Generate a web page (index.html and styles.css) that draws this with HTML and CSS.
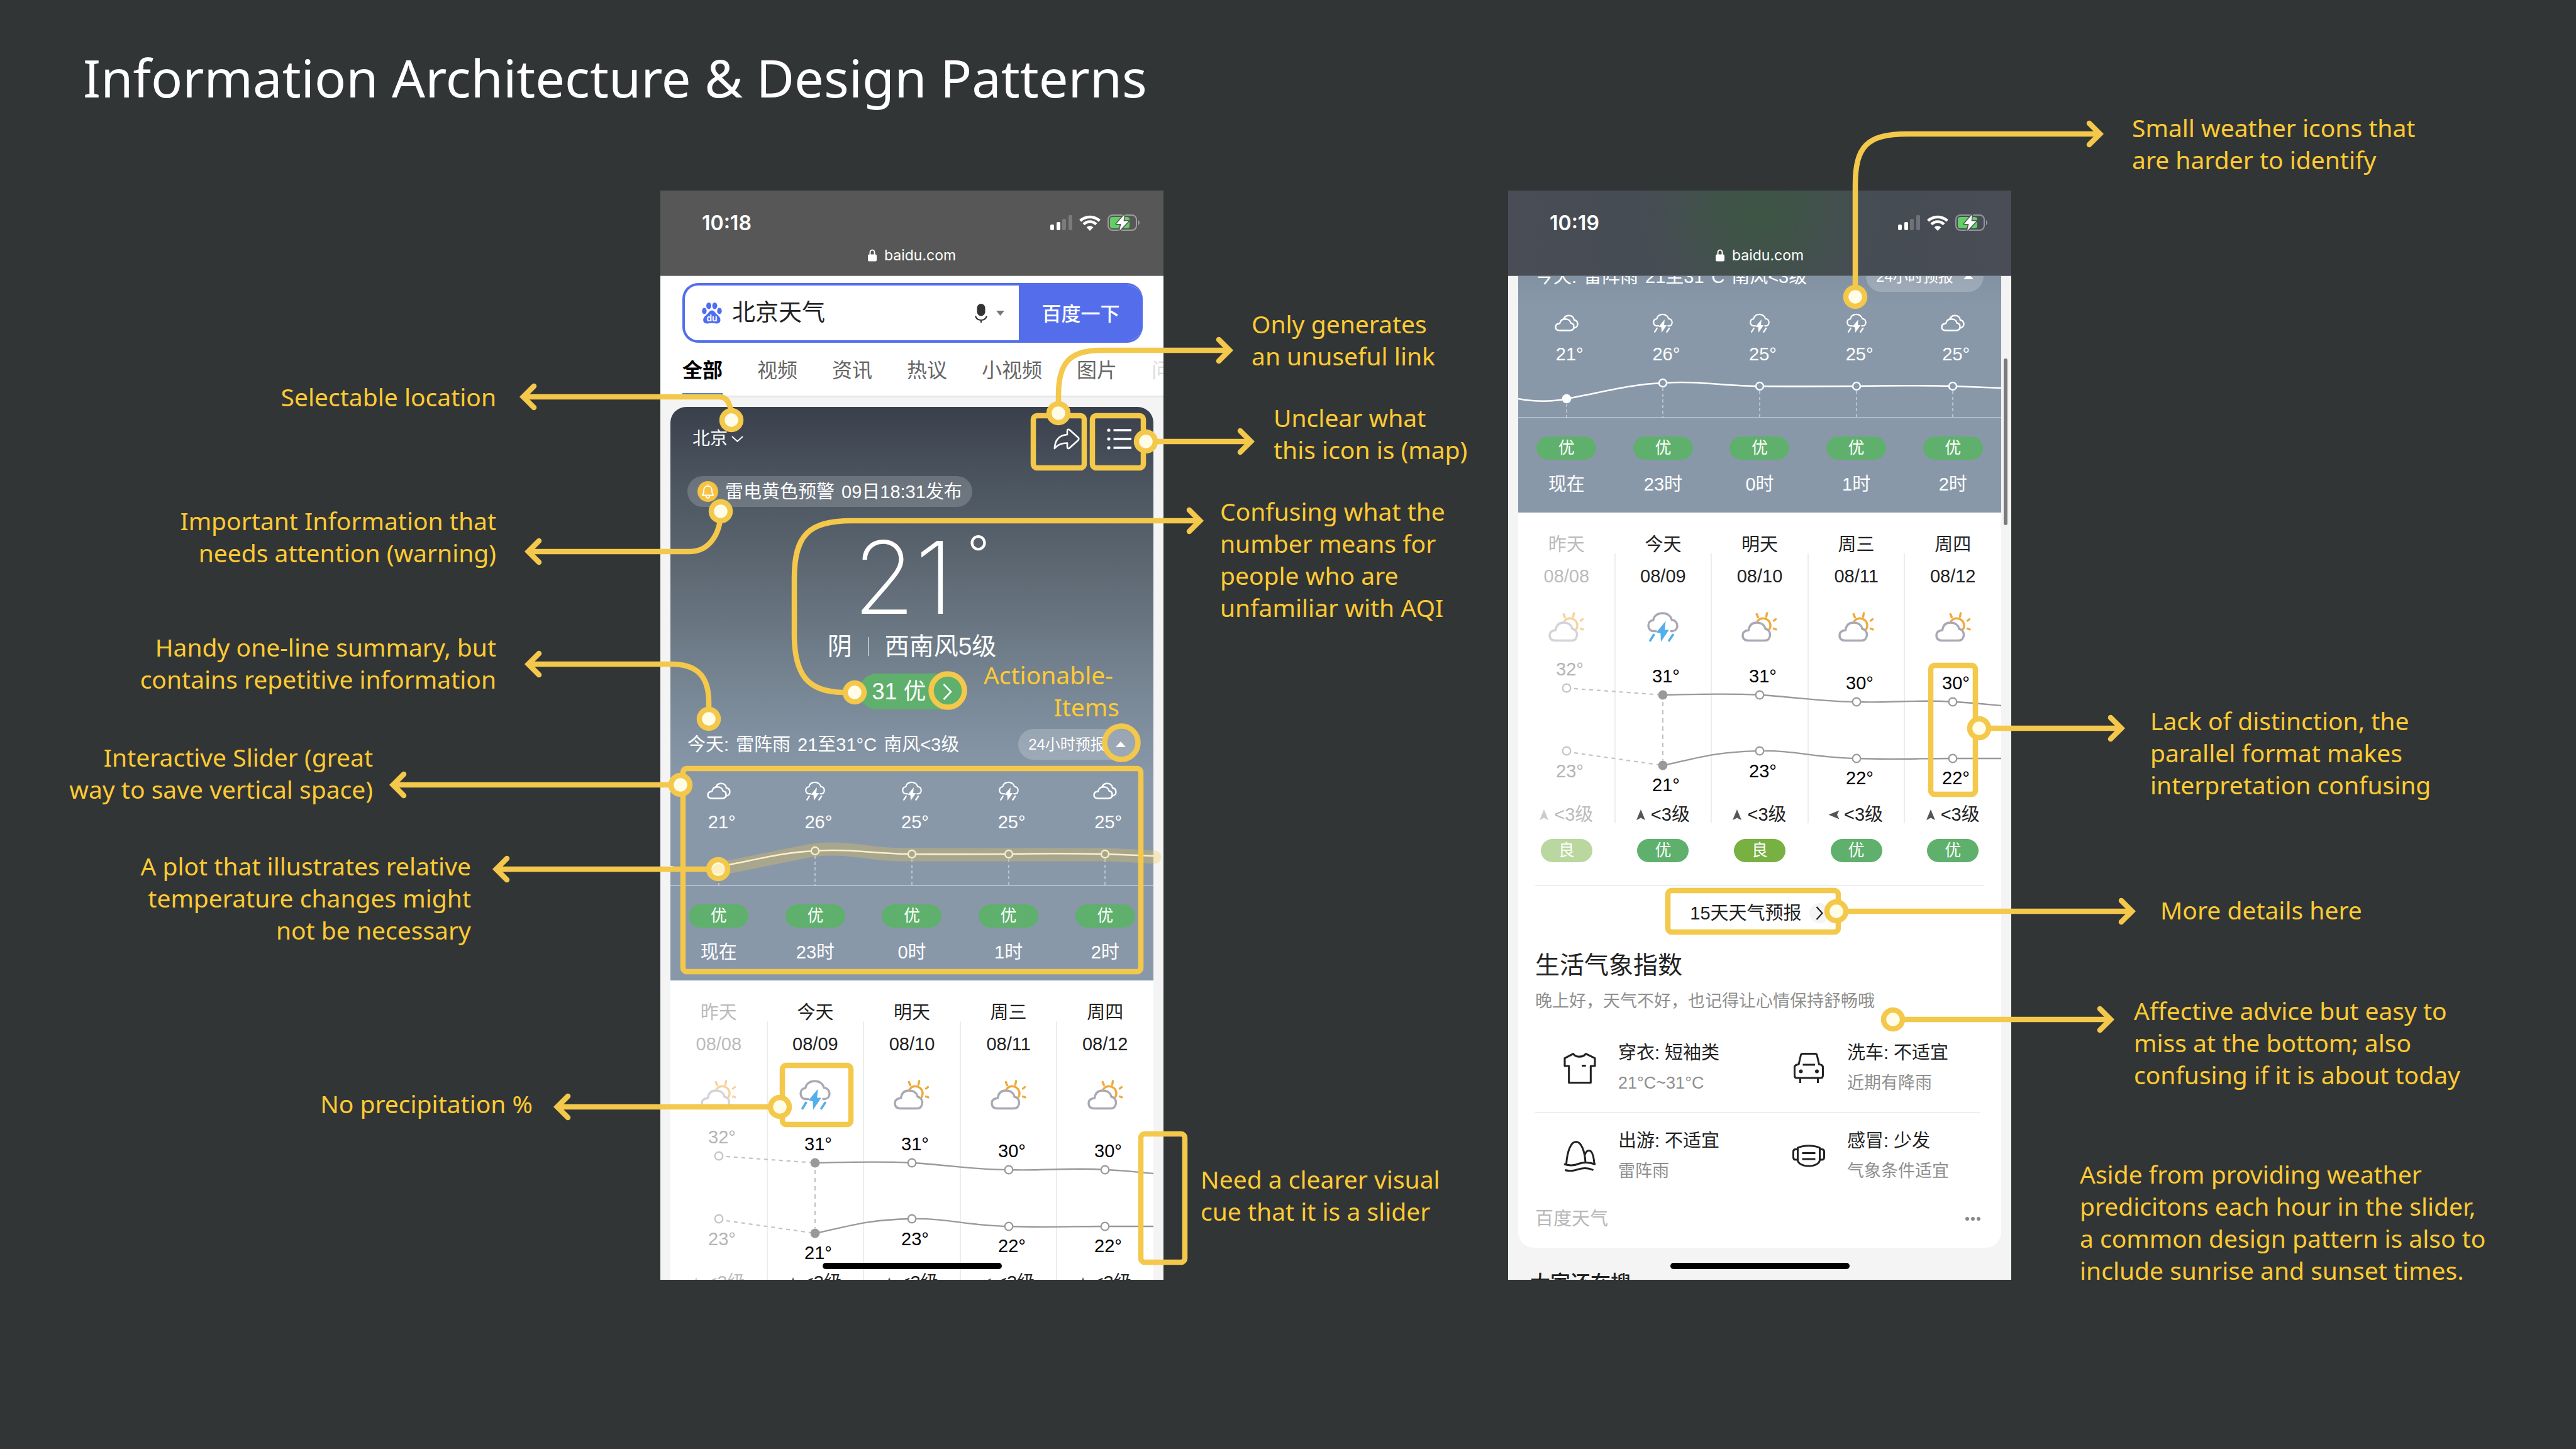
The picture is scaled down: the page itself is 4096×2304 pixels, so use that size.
FILE: index.html
```html
<!DOCTYPE html>
<html lang="en">
<head>
<meta charset="utf-8">
<title>Information Architecture &amp; Design Patterns</title>
<link rel="stylesheet" href="styles.css">
</head>
<body>
<svg class="defs" aria-hidden="true">
  <symbol id="signal" viewBox="0 0 35 24">
    <rect x="0" y="15" width="6" height="9" rx="2" fill="#fff"/>
    <rect x="10" y="11" width="6" height="13" rx="2" fill="#fff"/>
    <rect x="19" y="6" width="6" height="18" rx="2" fill="#fff" opacity=".22"/>
    <rect x="29" y="0" width="6" height="24" rx="2" fill="#fff" opacity=".22"/>
  </symbol>
  <symbol id="wifi" viewBox="0 0 34 25">
    <g fill="none" stroke="#fff" stroke-width="4.6">
      <path d="M1.7 9.2A22 22 0 0 1 32.3 9.2"/>
      <path d="M7 14.6A14.3 14.3 0 0 1 27 14.6"/>
    </g>
    <path d="M17 25 11.6 19.6A7.6 7.6 0 0 1 22.4 19.6Z" fill="#fff"/>
  </symbol>
  <symbol id="battery" viewBox="0 0 51 26">
    <rect x="1" y="1" width="45" height="24" rx="7" fill="none" stroke="#fff" stroke-opacity=".42" stroke-width="2"/>
    <rect x="4" y="4" width="31" height="18" rx="4" fill="#62cf66"/>
    <path d="M49 9C51.5 10.5 51.5 15.5 49 17Z" fill="#fff" opacity=".45"/>
    <path d="M27 0 14 15H21.5L19 26 33.5 10.5H25.5Z" fill="#fff" stroke="#505355" stroke-width="3" stroke-linejoin="round" paint-order="stroke"/>
  </symbol>
  <symbol id="lock" viewBox="0 0 14 20">
    <path d="M3.5 10V5.5A3.5 4 0 0 1 10.5 5.5V10" fill="none" stroke="#fff" stroke-width="2"/>
    <rect x="0" y="8.5" width="14" height="11" rx="2" fill="#fff"/>
  </symbol>
  <symbol id="clouds" viewBox="0 0 38 27">
    <g fill="none" stroke="#fff" stroke-width="2.4" stroke-linejoin="round" stroke-linecap="round">
      <path d="M8 25H24C28.5 25 30.5 22.5 30.5 19C30.5 15.5 28 13.5 25.5 13C25 9 21 6.8 16.5 6.8C12 6.8 9 9.5 8 13.8C4 14.2 1.5 16.5 1.5 19.5C1.5 23 4 25 8 25Z"/>
      <path d="M14.5 6.5C16 3 19 1.3 22.5 1.3C27 1.3 30.5 4 31 8.3C34.5 9 36.5 11.5 36.5 14.8C36.5 18 34 20.5 30.8 21"/>
    </g>
  </symbol>
  <symbol id="thunder" viewBox="0 0 50 48">
    <path class="cloud" d="M14 30.5H10C5 30.5 2 26.5 2 21.5C2 16.5 5.5 13.5 10 13C10.5 6 17 2 24.5 2C32 2 38 6.5 39 12.5C44.5 13 48 17 48 22C48 27 44.5 30.5 40 30.5H38"/>
    <path class="bolt" d="M29.5 14.5 14.7 32.5 21.3 34 22 47.5 34.8 28.5H28.2Z"/>
    <path class="rain" d="M10.5 36.5 5 45.5M41 36.5 35 45.5"/>
  </symbol>
  <symbol id="suncloud" viewBox="0 0 57 48">
    <g fill="none" stroke-width="3.4" stroke-linecap="round" stroke-linejoin="round">
      <path stroke="#f0a93c" d="M25.5 14.5A11 11 0 0 1 43.5 29M24.3 3.5 26.3 8.5M40.6 2 39.5 7.5M54.5 11.5 51.5 14M51.5 26.5 55 27.8"/>
      <path stroke="#a9a9b5" fill="#fff" d="M11 45.5H37C42.5 45.5 45.5 41.5 45.5 36C45.5 30.5 41.5 27.5 38 27C37 21 32 17 24 17C16.5 17 12.5 22 11.5 29C5.5 29.5 2 32.5 2 37C2 42.5 5 45.5 11 45.5Z"/>
    </g>
  </symbol>
  <symbol id="wind" viewBox="0 0 14 17"><path d="M7 0 14 17 7 13.5 0 17Z" fill="currentColor"/></symbol>
  <symbol id="hourline" viewBox="0 0 768 90">
    <path d="M0 85H768" stroke="#fff" stroke-opacity=".35" stroke-width="2"/>
    <path d="M77 63V85M230 38V85M384 43V85M538 43V85M691 43V85" stroke="#fff" stroke-opacity=".4" stroke-width="2" stroke-dasharray="5 4"/>
    <path d="M0 55C25 60 55 60 77 55C130 46 175 32 230 30C285 26 330 35 384 35C440 36 490 35 538 35C590 34 640 34 691 35L768 38" fill="none" stroke="#fff" stroke-width="2.6"/>
    <circle cx="77" cy="55" r="7.3" fill="#fff"/>
    <g fill="#8998a9" stroke="#fff" stroke-width="2.4">
      <circle cx="230" cy="30" r="6"/><circle cx="384" cy="35" r="6"/><circle cx="538" cy="35" r="6"/><circle cx="691" cy="35" r="6"/>
    </g>
  </symbol>
  <symbol id="dayline" viewBox="0 0 768 258">
    <g fill="none" stroke="#c4c4c4" stroke-width="2.2">
      <path d="M89 74 223 83.5M89 176 223 195" stroke-dasharray="6 6"/>
      <path d="M230 95V188" stroke-dasharray="7 6"/>
      <circle cx="77" cy="73" r="6.3"/><circle cx="77" cy="173" r="6.3"/>
    </g>
    <g fill="none" stroke="#999" stroke-width="2.3">
      <path d="M230 84C285 83 330 81 384 84C440 87 480 95 538 95C590 97 640 91 691 95C720 96 745 99 768 101"/>
      <path d="M230 196C275 187 310 174 384 173C440 172 475 184 538 185C590 187 640 185 691 185H768"/>
    </g>
    <g fill="#fff" stroke="#999" stroke-width="2.2">
      <circle cx="384" cy="84" r="6.3"/><circle cx="538" cy="95" r="6.3"/><circle cx="691" cy="95" r="6.3"/>
      <circle cx="384" cy="173" r="6.3"/><circle cx="538" cy="185" r="6.3"/><circle cx="691" cy="185" r="6.3"/>
    </g>
    <circle cx="230" cy="84" r="7.4" fill="#999"/><circle cx="230" cy="196" r="7.4" fill="#999"/>
  </symbol>
  <marker id="head" markerUnits="userSpaceOnUse" markerWidth="40" markerHeight="40" orient="auto" overflow="visible">
    <path d="M-17-17 0 0-17 17" fill="none" stroke="#f3c84b" stroke-width="8.5" stroke-linecap="round"/>
  </marker>
</svg>

<header class="page-head"><h1>Information Architecture &amp; Design Patterns</h1></header>

<main class="board">
  <section class="device device-a">
    <div class="screen">
      <div class="status">
        <div class="status-row"><time>10:18</time>
          <span class="status-icons"><svg width="35" height="24"><use href="#signal"/></svg><svg width="34" height="25"><use href="#wifi"/></svg><svg width="51" height="26"><use href="#battery"/></svg></span>
        </div>
        <div class="url"><svg width="14" height="20"><use href="#lock"/></svg><span>baidu.com</span></div>
      </div>

      <form class="search">
        <svg width="32" height="34" viewBox="0 0 32 34" fill="#4e6ef2">
          <ellipse cx="11" cy="5.3" rx="4" ry="5.3"/><ellipse cx="20.5" cy="5.3" rx="4" ry="5.3"/>
          <ellipse cx="3.9" cy="13.5" rx="3.7" ry="5"/><ellipse cx="28" cy="13.5" rx="3.7" ry="5"/>
          <path d="M16 12.5C19.5 12.5 21 16 23.5 18.5C27 21.5 29.8 24 29.5 28.5C29.2 32.5 26 34 22 33.2C18 32.5 14 32.5 10 33.2C6 34 2.5 32.5 2.2 28.5C2 24 5 21.5 8.5 18.5C11 16 12.5 12.5 16 12.5Z"/>
          <text class="paw-text" x="16" y="30" text-anchor="middle">du</text>
        </svg>
        <input type="text" value="北京天气" aria-label="搜索">
        <button type="button" class="mic" aria-label="语音">
          <svg width="20" height="30" viewBox="0 0 20 30"><rect x="3.5" y="0" width="13" height="19.5" rx="6.5" fill="#333"/><path d="M1 19.5C2.5 24 6 26 10 26S17.5 24 19 19.5M10 26V30" fill="none" stroke="#333" stroke-width="2.2"/></svg>
          <svg width="13" height="8" viewBox="0 0 13 8"><path d="M0 0H13L6.5 8Z" fill="#777"/></svg>
        </button>
        <button type="button" class="go">百度一下</button>
      </form>
      <nav class="tabs">
        <a href="#all" class="on">全部</a><a href="#video">视频</a><a href="#news">资讯</a><a href="#hot">热议</a><a href="#short">小视频</a><a href="#pics">图片</a><a href="#ask" class="dim">问答</a>
      </nav>

      <div class="feed">
        <article class="card">
          <div class="sky sky-full">
            <div class="place">
              <button type="button" class="plain city">北京<svg width="19" height="10" viewBox="0 0 19 10"><path d="M1 1 9.5 8.8 18 1" fill="none" stroke="#fff" stroke-width="2"/></svg></button>
              <span class="tools">
                <button type="button" class="plain" aria-label="分享"><svg width="42" height="34" viewBox="0 0 42 34"><path d="M22 10V4C22 1.5 24 1 26 2.8L39 14.5C40.8 16 40.8 17.5 39 19.2L26 31C24 32.8 22 32.3 22 30V23.5C13 23.5 6.5 26 1.8 32C2.5 19 9 11 22 10Z" fill="none" stroke="#fff" stroke-width="2.6" stroke-linejoin="round"/></svg></button>
                <button type="button" class="plain" aria-label="列表"><svg width="40" height="34" viewBox="0 0 40 34"><g fill="#fff"><circle cx="3" cy="3" r="2.6"/><circle cx="3" cy="17" r="2.6"/><circle cx="3" cy="31" r="2.6"/></g><path d="M10.5 3H39M10.5 17H39M10.5 31H39" stroke="#fff" stroke-width="3.4"/></svg></button>
              </span>
            </div>
            <div class="alert">
              <svg width="33" height="33" viewBox="0 0 33 33"><circle cx="16.5" cy="16.5" r="16.5" fill="#f5c242"/><path d="M7.5 22.5H25.5C23.3 20.5 23 18.5 23 15C23 10.8 20.5 7.8 16.5 7.8C12.5 7.8 10 10.8 10 15C10 18.5 9.7 20.5 7.5 22.5ZM16.5 5.5V7.8M13.8 23.5C13.8 28 19.2 28 19.2 23.5" fill="none" stroke="#fff" stroke-width="1.8" stroke-linejoin="round"/></svg>
              <span>雷电黄色预警</span><span>09日18:31发布</span>
            </div>
            <p class="temp">21<sup>°</sup></p>
            <p class="cond"><span>阴</span><i></i><span>西南风5级</span></p>
            <a href="#aqi" class="aqi">31 优<svg width="15" height="26" viewBox="0 0 15 26"><path d="M1.5 1 13 13 1.5 25" fill="none" stroke="#fff" stroke-width="2.6"/></svg></a>
            <div class="summary">
              <p><span>今天:</span><span>雷阵雨</span><span>21至31°C</span><span>南风&lt;3级</span></p>
              <button type="button" class="fold">24小时预报<svg width="16" height="9" viewBox="0 0 16 9"><path d="M0 9 8 0 16 9Z" fill="#fff"/></svg></button>
            </div>
            <div class="hours">
              <ol class="cols marks-row">
                <li><svg width="38" height="27"><use href="#clouds"/></svg><b>21°</b></li>
                <li><svg width="32" height="31"><use href="#thunder"/></svg><b>26°</b></li>
                <li><svg width="32" height="31"><use href="#thunder"/></svg><b>25°</b></li>
                <li><svg width="32" height="31"><use href="#thunder"/></svg><b>25°</b></li>
                <li><svg width="38" height="27"><use href="#clouds"/></svg><b>25°</b></li>
              </ol>
              <svg class="hour-chart" viewBox="0 0 768 90"><use href="#hourline"/></svg>
              <ol class="cols time-row">
                <li><em class="tag wide">优</em>现在</li>
                <li><em class="tag wide">优</em>23时</li>
                <li><em class="tag wide">优</em>0时</li>
                <li><em class="tag wide">优</em>1时</li>
                <li><em class="tag wide">优</em>2时</li>
              </ol>
            </div>
          </div>
          <div class="days">
            <ol class="cols day-row">
              <li class="past"><span>昨天</span><span>08/08</span><svg width="57" height="48"><use href="#suncloud"/></svg></li>
              <li><span>今天</span><span>08/09</span><svg class="tint" width="50" height="48"><use href="#thunder"/></svg></li>
              <li><span>明天</span><span>08/10</span><svg width="57" height="48"><use href="#suncloud"/></svg></li>
              <li><span>周三</span><span>08/11</span><svg width="57" height="48"><use href="#suncloud"/></svg></li>
              <li><span>周四</span><span>08/12</span><svg width="57" height="48"><use href="#suncloud"/></svg></li>
            </ol>
            <svg class="day-chart" viewBox="0 0 768 258"><use href="#dayline"/>
              <text class="faint" x="60" y="53">32°</text><text x="213" y="64">31°</text><text x="367" y="64">31°</text><text x="521" y="75">30°</text><text x="674" y="75">30°</text>
              <text class="faint" x="60" y="215">23°</text><text x="213" y="237">21°</text><text x="367" y="215">23°</text><text x="521" y="226">22°</text><text x="674" y="226">22°</text>
            </svg>
            <ol class="cols wind-row">
              <li class="past"><svg width="14" height="17"><use href="#wind"/></svg>&lt;3级</li>
              <li><svg width="14" height="17"><use href="#wind"/></svg>&lt;3级</li>
              <li><svg width="14" height="17"><use href="#wind"/></svg>&lt;3级</li>
              <li><svg class="west" width="14" height="17"><use href="#wind"/></svg>&lt;3级</li>
              <li><svg width="14" height="17"><use href="#wind"/></svg>&lt;3级</li>
            </ol>
          </div>
        </article>
      </div>
      <span class="home-bar"></span>
    </div>

    <svg class="overlay" aria-hidden="true">
      <path class="band" d="M92 1079 236 1050C270 1044 300 1048 340 1053C370 1057 390 1056 410 1056H700C730 1056 755 1058 786 1060"/>
      <g class="frames">
        <rect x="593" y="358" width="81" height="83" rx="6"/><rect x="687" y="358" width="81" height="83" rx="6"/>
        <rect x="36" y="919" width="728" height="323" rx="6"/>
        <rect x="194" y="1391" width="109" height="94" rx="6"/>
        <rect x="764" y="1500" width="70" height="204" rx="6"/>
        <circle cx="457" cy="795" r="26.5"/><circle cx="733" cy="878" r="26.5"/>
      </g>
      <g class="arrows">
        <path d="M113 365C113 341 107 328 94 328H-218"/>
        <path d="M96 510C96 548 76 574 47 574H-210"/>
        <path d="M77 840V813C77 770 56 753 17 753H-210"/>
        <path d="M32 945H-425"/>
        <path d="M92 1079H-261"/>
        <path d="M190 1457H-164"/>
        <path d="M633 354V325C633 275 650 254 700 254H905"/>
        <path d="M772 399H939"/>
        <path d="M309 798H290C236 797 213 772 213 706V616C213 548 236 525 304 525H858"/>
      </g>
      <g class="dots">
        <circle cx="113" cy="365" r="15"/><circle cx="96" cy="510" r="15"/><circle cx="77" cy="840" r="15"/><circle cx="32" cy="945" r="15"/><circle cx="92" cy="1079" r="15"/><circle cx="190" cy="1457" r="15"/><circle cx="633" cy="354" r="15"/><circle cx="772" cy="399" r="15"/><circle cx="309" cy="798" r="15"/>
      </g>
      <path class="band-cap" d="M81 1082A11 11 0 1 1 103 1082A12 8 0 0 1 81 1082Z"/>
    </svg>
    <p class="note left n-location">Selectable location</p>
    <p class="note left n-warning">Important Information that<br>needs attention (warning)</p>
    <p class="note left n-summary">Handy one-line summary, but<br>contains repetitive information</p>
    <p class="note left n-slider">Interactive Slider (great<br>way to save vertical space)</p>
    <p class="note left n-plot">A plot that illustrates relative<br>temperature changes might<br>not be necessary</p>
    <p class="note left n-rain">No precipitation %</p>
    <p class="note left n-action">Actionable-&nbsp;<br>Items</p>
    <p class="note n-share">Only generates<br>an unuseful link</p>
    <p class="note n-map">Unclear what<br>this icon is (map)</p>
    <p class="note n-aqi">Confusing what the<br>number means for<br>people who are<br>unfamiliar with AQI</p>
    <p class="note n-cue">Need a clearer visual<br>cue that it is a slider</p>
  </section>

  <section class="device device-b">
    <div class="screen">
      <div class="status status-tinted">
        <div class="status-row"><time>10:19</time>
          <span class="status-icons"><svg width="35" height="24"><use href="#signal"/></svg><svg width="34" height="25"><use href="#wifi"/></svg><svg width="51" height="26"><use href="#battery"/></svg></span>
        </div>
        <div class="url"><svg width="14" height="20"><use href="#lock"/></svg><span>baidu.com</span></div>
      </div>
      <div class="feed scrolled">
        <article class="card">
          <div class="sky sky-tail">
            <div class="summary">
              <p><span>今天:</span><span>雷阵雨</span><span>21至31°C</span><span>南风&lt;3级</span></p>
              <button type="button" class="fold">24小时预报<svg width="16" height="9" viewBox="0 0 16 9"><path d="M0 9 8 0 16 9Z" fill="#fff"/></svg></button>
            </div>
            <div class="hours">
              <ol class="cols marks-row">
                <li><svg width="38" height="27"><use href="#clouds"/></svg><b>21°</b></li>
                <li><svg width="32" height="31"><use href="#thunder"/></svg><b>26°</b></li>
                <li><svg width="32" height="31"><use href="#thunder"/></svg><b>25°</b></li>
                <li><svg width="32" height="31"><use href="#thunder"/></svg><b>25°</b></li>
                <li><svg width="38" height="27"><use href="#clouds"/></svg><b>25°</b></li>
              </ol>
              <svg class="hour-chart" viewBox="0 0 768 90"><use href="#hourline"/></svg>
              <ol class="cols time-row">
                <li><em class="tag wide">优</em>现在</li>
                <li><em class="tag wide">优</em>23时</li>
                <li><em class="tag wide">优</em>0时</li>
                <li><em class="tag wide">优</em>1时</li>
                <li><em class="tag wide">优</em>2时</li>
              </ol>
            </div>
          </div>
          <div class="days">
            <ol class="cols day-row">
              <li class="past"><span>昨天</span><span>08/08</span><svg width="57" height="48"><use href="#suncloud"/></svg></li>
              <li><span>今天</span><span>08/09</span><svg class="tint" width="50" height="48"><use href="#thunder"/></svg></li>
              <li><span>明天</span><span>08/10</span><svg width="57" height="48"><use href="#suncloud"/></svg></li>
              <li><span>周三</span><span>08/11</span><svg width="57" height="48"><use href="#suncloud"/></svg></li>
              <li><span>周四</span><span>08/12</span><svg width="57" height="48"><use href="#suncloud"/></svg></li>
            </ol>
            <svg class="day-chart" viewBox="0 0 768 258"><use href="#dayline"/>
              <text class="faint" x="60" y="53">32°</text><text x="213" y="64">31°</text><text x="367" y="64">31°</text><text x="521" y="75">30°</text><text x="674" y="75">30°</text>
              <text class="faint" x="60" y="215">23°</text><text x="213" y="237">21°</text><text x="367" y="215">23°</text><text x="521" y="226">22°</text><text x="674" y="226">22°</text>
            </svg>
            <ol class="cols wind-row">
              <li class="past"><svg width="14" height="17"><use href="#wind"/></svg>&lt;3级</li>
              <li><svg width="14" height="17"><use href="#wind"/></svg>&lt;3级</li>
              <li><svg width="14" height="17"><use href="#wind"/></svg>&lt;3级</li>
              <li><svg class="west" width="14" height="17"><use href="#wind"/></svg>&lt;3级</li>
              <li><svg width="14" height="17"><use href="#wind"/></svg>&lt;3级</li>
            </ol>
          </div>
          <ol class="cols tag-row">
            <li class="past"><em class="tag good">良</em></li>
            <li><em class="tag">优</em></li>
            <li><em class="tag good">良</em></li>
            <li><em class="tag">优</em></li>
            <li><em class="tag">优</em></li>
          </ol>
          <div class="details">
            <a href="#forecast" class="more">15天天气预报<span class="more-dot"><svg width="12" height="22" viewBox="0 0 12 22"><path d="M1.5 1 10.5 11 1.5 21" fill="none" stroke="#222" stroke-width="2.2"/></svg></span></a>
            <h2>生活气象指数</h2>
            <p class="greet">晚上好，天气不好，也记得让心情保持舒畅哦</p>
            <ul class="index">
              <li><svg width="52" height="49" viewBox="0 0 50 48"><path d="M14.7 1.5C19 7.5 30 7.5 34.5 1.5L48.5 8.5V20.5H42V46.5H8V20.5H1.5V8.5ZM28 20H34.5"/></svg>
                <div><strong>穿衣: 短袖类</strong><span>21°C~31°C</span></div></li>
              <li><svg width="52" height="48" viewBox="-2 0 52 48"><path d="M8 18.5 11.5 3.5C12 2 12.5 1.5 14 1.5H34.5C36 1.5 36.5 2 37 3.5L40.5 18.5C44.5 18.5 46.5 20 46.5 23.5V36C46.5 39 45.5 40 43 40H5C2.5 40 1.5 39 1.5 36V23.5C1.5 20 4 18.5 8 18.5ZM14.5 19H34M10.5 40V48M38.5 40V48"/><g fill="#222" stroke="none"><circle cx="11.5" cy="29.5" r="3"/><circle cx="37" cy="29.5" r="3"/></g></svg>
                <div><strong>洗车: 不适宜</strong><span>近期有降雨</span></div></li>
              <li><svg width="52" height="49" viewBox="0 0 52 49"><path d="M4.5 37C6 17 11.5 1.5 20 1.5S34 17 35 34.5M33.5 24C35 18 37.5 15.5 40.5 15.5C45.5 15.5 48 24 49 36M1 37C10 40 18 39 24 36.5C32 33.5 42 34 51 37.5M2.5 46.5C10 48.5 18 47.5 24 45.2C32 42.5 40 43 47.5 46.5"/></svg>
                <div><strong>出游: 不适宜</strong><span>雷阵雨</span></div></li>
              <li><svg width="52" height="36" viewBox="0 0 52 36"><path d="M8.5 5C18 .5 34 .5 43.5 5V24C43.5 30 36 34 26 34S8.5 30 8.5 24ZM8.5 7.5H5C2.5 7.5 1.5 9 1.5 11.5V20C1.5 22.5 2.5 24 5 24H8.5M43.5 7.5H47C49.5 7.5 50.5 9 50.5 11.5V20C50.5 22.5 49.5 24 47 24H43.5M15.5 13.5H36.5M15.5 23H36.5"/></svg>
                <div><strong>感冒: 少发</strong><span>气象条件适宜</span></div></li>
            </ul>
            <div class="source"><span>百度天气</span><button type="button" class="plain" aria-label="更多"><svg width="26" height="8" viewBox="0 0 26 8" fill="#888"><circle cx="4" cy="4" r="3"/><circle cx="13" cy="4" r="3"/><circle cx="22" cy="4" r="3"/></svg></button></div>
          </div>
        </article>
        <h2 class="also">大家还在搜</h2>
      </div>
      <span class="scroll-thumb"></span>
      <span class="home-bar"></span>
    </div>

    <svg class="overlay" aria-hidden="true">
      <g class="frames">
        <rect x="672" y="755" width="71" height="205" rx="6"/>
        <rect x="254" y="1113" width="271" height="66" rx="6"/>
      </g>
      <g class="arrows">
        <path d="M552 169V-8C552-70 570-90 635-90H941"/>
        <path d="M749 855H975"/>
        <path d="M522 1146H992"/>
        <path d="M612 1318H958"/>
      </g>
      <g class="dots"><circle cx="552" cy="169" r="15"/><circle cx="749" cy="855" r="15"/><circle cx="522" cy="1146" r="15"/><circle cx="612" cy="1318" r="15"/></g>
    </svg>
    <p class="note n-icons">Small weather icons that<br>are harder to identify</p>
    <p class="note n-lack">Lack of distinction, the<br>parallel format makes<br>interpretation confusing</p>
    <p class="note n-more">More details here</p>
    <p class="note n-advice">Affective advice but easy to<br>miss at the bottom; also<br>confusing if it is about today</p>
    <p class="note n-aside">Aside from providing weather<br>predicitons each hour in the slider,<br>a common design pattern is also to<br>include sunrise and sunset times.</p>
  </section>
</main>
</body>
</html>
```
FILE: styles.css
```css
* { box-sizing: border-box; }

body {
  margin: 0;
  min-height: 100vh;
  background: #323536;
  color: #fff;
  font-family: "Liberation Sans", "Noto Sans CJK SC", sans-serif;
  overflow-x: hidden;
}

h1, h2, p, ol, ul { margin: 0; padding: 0; font-weight: 400; }
ol, ul { list-style: none; }
em, i, b { font-style: normal; font-weight: 400; }
a { color: inherit; text-decoration: none; }
button, input { font: inherit; color: inherit; border: 0; padding: 0; background: none; }
svg { display: block; flex: none; }

.defs { position: absolute; width: 0; height: 0; }
.plain { display: flex; align-items: center; }

.page-head { padding: 67px 132px 124px; }
.page-head h1 {
  font-family: "Noto Sans", sans-serif;
  font-size: 83px;
  line-height: 112px;
}

/* Two phones with room for notes beside them */
.board {
  display: grid;
  grid-template-columns: 1050fr 800px 548fr 800px 898fr;
  align-items: start;
}
.device { position: relative; }
.device-a { grid-column: 2; }
.device-b { grid-column: 4; }
.screen {
  position: relative;
  isolation: isolate;
  height: 1732px;
  overflow: hidden;
  background: #fff;
}

/* Status bar */
.status {
  position: relative;
  z-index: 1;
  height: 136px;
  padding-top: 14px;
  background: #575757;
  border-bottom: 1px solid #8c8c8c;
  font-family: Inter, sans-serif;
}
.status-tinted {
  background:
    radial-gradient(ellipse 190px 170px at 50% 26%, #3d5643, rgba(61, 86, 67, .5) 50%, transparent),
    linear-gradient(to right, #4a4d55, #464c54 20%, #464c54 80%, #4a4d55);
  border-color: #6b737b;
}
.status-row {
  display: flex;
  align-items: center;
  justify-content: space-between;
  height: 74px;
  padding: 0 38px 0 66px;
  font-size: 32px;
  font-weight: 600;
}
.status-icons { display: flex; align-items: center; gap: 11px; }
.url {
  display: flex;
  align-items: center;
  justify-content: center;
  gap: 12px;
  height: 30px;
  font-size: 23px;
}

/* Search */
.search {
  display: flex;
  align-items: center;
  height: 95px;
  margin: 11px 33px 0 35px;
  padding-left: 27px;
  border: 4px solid #546eeb;
  border-right: 0;
  border-radius: 25px;
  background: #fff;
  overflow: hidden;
}
.search input {
  flex: 1;
  min-width: 0;
  margin-left: 16px;
  color: #222;
  font-size: 37px;
  line-height: 48px;
  outline: none;
}
.paw-text { fill: #fff; font: 700 14px "Liberation Sans", sans-serif; }
.mic { display: flex; align-items: center; gap: 14px; margin-right: 23px; }
.go {
  align-self: stretch;
  width: 197px;
  padding-bottom: 3px;
  background: #546eeb;
  color: #fff;
  font-size: 31px;
  font-weight: 500;
}

.tabs {
  display: flex;
  gap: 55px;
  height: 87px;
  padding-left: 35px;
  border-bottom: 3px solid #e8e8e8;
  color: #666;
  font-size: 32px;
  line-height: 88px;
  white-space: nowrap;
  overflow: hidden;
}
.tabs .on { color: #000; font-weight: 700; border-bottom: 4px solid #4e7ee0; }
.tabs .dim { color: #ddd; }

/* Weather card */
.feed { padding: 15px 16px 0; background: #f4f4f4; }
.card {
  border-radius: 25px;
  background: #fff;
  color: #222;
  font-size: 29px;
  line-height: 32px;
  overflow: hidden;
}
.sky { color: #fff; }
.sky-full {
  padding-top: 28px;
  background: linear-gradient(#3a404b, #4c5661 14%, #5c6671 27%, #697682 38%, #74828f 46%, #8090a0 57%, #8998a9 65%);
}
.sky-tail { background: linear-gradient(#7f8f9e, #8998a9 18%); }

.place {
  display: flex;
  align-items: center;
  justify-content: space-between;
  height: 46px;
  padding: 0 34px 0 35px;
}
.city { gap: 6px; font-size: 28px; }
.tools { display: flex; gap: 43px; }
.alert {
  display: flex;
  align-items: center;
  gap: 11px;
  width: max-content;
  height: 49px;
  margin: 36px 0 0 27px;
  padding: 0 16px;
  border-radius: 25px;
  background: rgba(255, 255, 255, .18);
}
.temp {
  position: relative;
  width: max-content;
  margin: 54px auto 0;
  padding-right: 28px;
  font-family: Inter, sans-serif;
  font-size: 160px;
  font-weight: 200;
  line-height: 116px;
}
.temp sup {
  position: absolute;
  right: -29px;
  top: -17px;
  font-size: 76px;
  line-height: 72px;
  font-weight: 300;
}
.cond {
  display: flex;
  align-items: center;
  justify-content: center;
  gap: 25px;
  margin-top: 30px;
  font-size: 39px;
  line-height: 44px;
}
.cond i { width: 2px; height: 30px; background: rgba(255, 255, 255, .5); }
.aqi {
  display: flex;
  align-items: center;
  justify-content: center;
  gap: 26px;
  width: 168px;
  height: 57px;
  margin: 21px auto 0;
  border-radius: 28px;
  background: #5fb06c;
  font-size: 36px;
}
.summary {
  display: flex;
  align-items: center;
  justify-content: space-between;
  height: 49px;
  padding: 0 28px 0 27px;
}
.aqi + .summary { margin-top: 31px; }
.summary p { display: flex; gap: 11px; }
.fold {
  display: flex;
  align-items: center;
  justify-content: center;
  gap: 16px;
  width: 187px;
  height: 49px;
  border-radius: 25px;
  background: rgba(255, 255, 255, .2);
  font-size: 24px;
}

.cols { display: grid; grid-template-columns: repeat(5, 1fr); }
.cols li { display: flex; flex-direction: column; align-items: center; }

.hours { padding: 34px 0 29px; }
.marks-row svg { height: 32px; }
.marks-row b { margin-top: 17px; padding-left: 10px; }
.hour-chart { width: 100%; height: 90px; }
.time-row { margin-top: 25px; }
.tag {
  width: 82px;
  height: 37px;
  border-radius: 19px;
  background: #5fb06c;
  color: #fff;
  font-size: 26px;
  line-height: 36px;
  text-align: center;
}
.tag.wide { width: 95px; margin-bottom: 23px; }
.tag.good { background: #78b041; }

.cloud { fill: none; stroke: var(--cloud, #fff); stroke-width: 3.4px; stroke-linecap: round; stroke-linejoin: round; }
.bolt { fill: var(--bolt, #fff); }
.rain { fill: none; stroke: var(--bolt, #fff); stroke-width: 3.6px; stroke-linecap: round; }
.tint { --cloud: #a9a9b5; --bolt: #54aeea; }

/* Daily forecast, with rules between the columns */
.days {
  margin-top: 35px;
  background:
    linear-gradient(#ededed, #ededed) 20% 30px / 2px 429px no-repeat,
    linear-gradient(#ededed, #ededed) 40% 30px / 2px 429px no-repeat,
    linear-gradient(#ededed, #ededed) 60% 30px / 2px 429px no-repeat,
    linear-gradient(#ededed, #ededed) 80% 30px / 2px 429px no-repeat;
}
.day-row span + span { margin-top: 18px; }
.day-row svg { margin-top: 41px; }
.past > * { opacity: .5; }
.day-row .past span { opacity: .3; }
.day-chart { width: 100%; height: 258px; font-size: 29px; fill: #000; }
.faint { fill: #b5b5b5; }
.wind-row li { flex-direction: row; justify-content: center; gap: 9px; }
.wind-row svg { color: #555; }
.wind-row .past { opacity: .3; }
.wind-row .past svg { opacity: 1; }
.west { transform: rotate(-90deg); }
.tag-row { margin-top: 23px; }

.details {
  margin: 36px 27px 0;
  padding: 27px 0 29px;
  border-top: 2px solid #eee;
}
.more {
  display: flex;
  align-items: center;
  gap: 12px;
  width: max-content;
  margin: 0 auto;
}
.more-dot {
  display: grid;
  place-items: center;
  width: 32px;
  height: 32px;
  border-radius: 50%;
  background: #f4f4f4;
}
.details h2 { margin-top: 45px; font-size: 39px; line-height: 44px; }
.greet { margin-top: 20px; color: #8f8f8f; font-size: 27px; line-height: 30px; }
.index {
  display: grid;
  grid-template-columns: 364px 1fr;
  margin: 23px 7px 0 0;
}
.index li {
  display: flex;
  align-items: center;
  gap: 35px;
  padding: 27px 0 29px 45px;
  line-height: 34px;
}
.index li:nth-child(-n+2) { border-bottom: 2px solid #eee; }
.index svg { fill: none; stroke: #222; stroke-width: 3px; stroke-linejoin: round; }
.index div { display: grid; gap: 14px; }
.index strong { font-weight: 400; }
.index div span { color: #8f8f8f; font-size: 27px; }
.source {
  display: flex;
  justify-content: space-between;
  margin-top: 13px;
  padding-right: 5px;
  color: #b8b8b8;
  line-height: 34px;
}

.scrolled { padding-top: 0; margin-top: -24px; min-height: 1620px; }
.also {
  padding: 36px 0 0 19px;
  color: #222;
  font-size: 32px;
  font-weight: 500;
  line-height: 40px;
}
.scroll-thumb {
  position: absolute;
  top: 267px;
  right: 6px;
  width: 6px;
  height: 265px;
  border-radius: 3px;
  background: #7a7a7a;
}
.home-bar {
  position: absolute;
  left: 50%;
  bottom: 17px;
  width: 285px;
  height: 10px;
  margin-left: -142px;
  border-radius: 5px;
  background: #000;
}

/* Annotations over and around each phone */
.overlay {
  position: absolute;
  inset: 0;
  width: 100%;
  height: 100%;
  overflow: visible;
  pointer-events: none;
}
.frames, .arrows { fill: none; stroke: #f3c84b; stroke-width: 8.5px; }
.arrows path { marker-end: url(#head); }
.dots { fill: #fffde8; stroke: #f3c84b; stroke-width: 8.5px; }
.band { fill: none; stroke: rgba(243, 200, 75, .3); stroke-width: 21px; stroke-linecap: round; }
.band-cap { fill: rgba(243, 200, 75, .25); }

.note {
  position: absolute;
  color: #ffcb33;
  font-family: "Noto Sans", sans-serif;
  font-size: 39px;
  line-height: 51px;
  white-space: nowrap;
}
.left { text-align: right; }
.n-location { top: 302px; right: calc(100% + 261px); }
.n-warning { top: 499px; right: calc(100% + 261px); }
.n-summary { top: 700px; right: calc(100% + 261px); }
.n-slider { top: 875px; right: calc(100% + 457px); }
.n-plot { top: 1048px; right: calc(100% + 301px); }
.n-rain { top: 1426px; right: calc(100% + 203px); }
.n-action { top: 744px; right: 70px; }
.n-share { top: 186px; left: 940px; }
.n-map { top: 335px; left: 975px; }
.n-aqi { top: 484px; left: 890px; }
.n-cue { top: 1546px; left: 859px; }
.n-icons { top: -126px; left: 992px; }
.n-lack { top: 817px; left: 1021px; }
.n-more { top: 1118px; left: 1037px; }
.n-advice { top: 1278px; left: 995px; }
.n-aside { top: 1538px; left: 909px; }
```
